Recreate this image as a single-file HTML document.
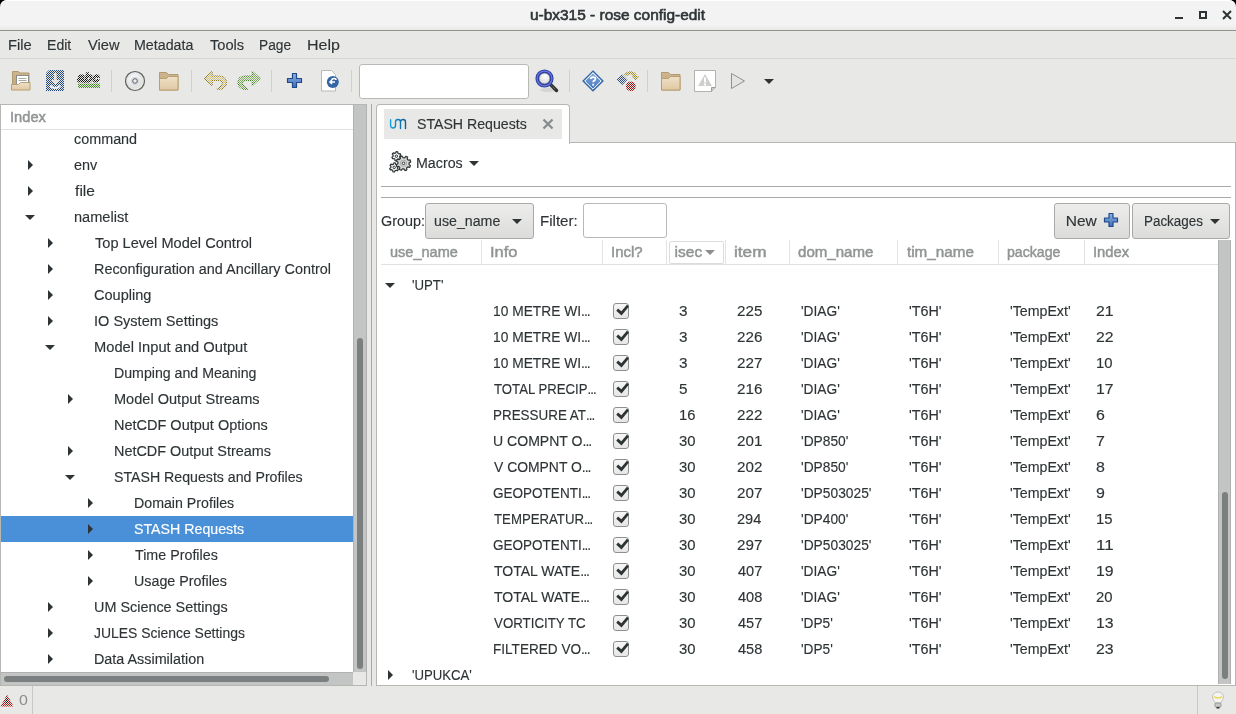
<!DOCTYPE html><html><head><meta charset="utf-8"><style>
*{box-sizing:border-box}
html,body{margin:0;padding:0}
body{width:1236px;height:714px;overflow:hidden;position:relative;background:#e8e8e7;font-family:"Liberation Sans",sans-serif;font-size:15.5px;color:#2e3436}
#root{position:absolute;left:0;top:0;width:1236px;height:714px;will-change:transform;overflow:hidden}
.ab{position:absolute}
.t{position:absolute;white-space:nowrap;line-height:26px;height:26px;transform-origin:0 18px;-webkit-text-stroke:0.15px currentColor}
.arr-r{position:absolute;width:0;height:0;border-top:5px solid transparent;border-bottom:5px solid transparent;border-left:5px solid #2e3436}
.arr-d{position:absolute;width:0;height:0;border-left:5px solid transparent;border-right:5px solid transparent;border-top:5px solid #2e3436}
.sep{position:absolute;width:1px;top:70px;height:22px;background:#cfcfcd}
.csep{position:absolute;top:240px;height:24px;width:1px;background:#e3e3e2}
.cb{position:absolute;left:613px;width:16px;height:16px;border:1px solid #8e908f;border-radius:3px;background:linear-gradient(#f6f6f6,#e6e6e6)}
.btn{position:absolute;border:1px solid #a9aaa8;border-radius:3px;background:linear-gradient(#ededec,#dcdcdb)}
</style></head><body><div id="root">
<svg width="0" height="0" style="position:absolute"><defs>
<pattern id="ck" width="2" height="2" patternUnits="userSpaceOnUse"><rect x="0" y="0" width="1" height="1" fill="#fff"/><rect x="1" y="1" width="1" height="1" fill="#fff"/></pattern>
<mask id="dm" maskUnits="userSpaceOnUse" x="0" y="0" width="40" height="40"><rect x="0" y="0" width="40" height="40" fill="url(#ck)"/></mask>
<linearGradient id="tan" x1="0" y1="0" x2="0" y2="1"><stop offset="0" stop-color="#efe0c6"/><stop offset="1" stop-color="#e0c9a4"/></linearGradient>
<linearGradient id="tanb" x1="0" y1="0" x2="0" y2="1"><stop offset="0" stop-color="#cdb68e"/><stop offset="1" stop-color="#bfa57a"/></linearGradient>
<linearGradient id="blu" x1="0" y1="0" x2="0" y2="1"><stop offset="0" stop-color="#8db2e3"/><stop offset="1" stop-color="#3d6fb8"/></linearGradient>
<radialGradient id="cd" cx="0.45" cy="0.4" r="0.6"><stop offset="0.1" stop-color="#ffffff"/><stop offset="0.55" stop-color="#e6e6ee"/><stop offset="0.8" stop-color="#dfe3d6"/><stop offset="1" stop-color="#fbfbfb"/></radialGradient>
<radialGradient id="glass" cx="0.55" cy="0.35" r="0.6"><stop offset="0" stop-color="#ffffff"/><stop offset="0.6" stop-color="#e4e4e2"/><stop offset="1" stop-color="#cfcfcd"/></radialGradient>
</defs></svg>
<div class="ab" style="left:0;top:0;width:1236px;height:31px;background:#000"></div>
<div class="ab" style="left:0;top:0;width:1236px;height:31px;background:linear-gradient(#f3f3f3 0,#f3f3f3 25px,#e8e8e7 30px);border-radius:7px 7px 0 0;border-bottom:1px solid #92938f;box-shadow:inset 0 1px 0 #ffffff"></div>
<div class="ab" style="left:1175px;top:17px;width:8px;height:2px;background:#2e3436"></div>
<div class="ab" style="left:1199px;top:11px;width:8px;height:8px;border:2px solid #2e3436"></div>
<svg class="ab" style="left:1222px;top:10px" width="10" height="10"><path d="M1 1L9 9M9 1L1 9" stroke="#2e3436" stroke-width="2"/></svg>
<div class="ab" style="left:0;top:58px;width:1236px;height:1px;background:#d6d6d4"></div>
<div class="sep" style="left:111px"></div>
<div class="sep" style="left:191px"></div>
<div class="sep" style="left:271px"></div>
<div class="sep" style="left:351px"></div>
<div class="sep" style="left:569px"></div>
<div class="sep" style="left:647px"></div>
<svg class="ab" style="left:10px;top:70px" width="24" height="24">
<path d="M2.5 1.5h6l1.5 1.5h9v15h-16.5z" fill="url(#tanb)" stroke="#b39b6f"/>
<rect x="6.5" y="5.5" width="12" height="10" fill="#fff" stroke="#8a8c88"/>
<path d="M8.5 8.5h8M8.5 10.5h8" stroke="#a8aaa5"/>
<path d="M1.5 14.5h7l2-2h9.5v7.5h-18.5z" fill="url(#tan)" stroke="#b79f74"/>
</svg>
<svg class="ab" style="left:44px;top:68px" width="24" height="24"><g mask="url(#dm)">
<path d="M2 5L5 2H20V23H2Z" fill="#1f4682"/>
<path d="M9.5 4.5h3.5v7h3.5l-5.25 5.5l-5.25-5.5h3.5z" fill="#dcdcdc" stroke="#333" stroke-width="0.8"/>
<path d="M6.5 17.5c1 2 2 2.5 4.75 2.5s3.75-.5 4.75-2.5" fill="none" stroke="#fafafa" stroke-width="2"/>
</g></svg>
<svg class="ab" style="left:76px;top:68px" width="26" height="24"><g mask="url(#dm)">
<text x="1.5" y="14" font-family="Liberation Sans" font-weight="bold" font-style="italic" font-size="13" fill="#111" stroke="#111" stroke-width="1.3" textLength="22" lengthAdjust="spacingAndGlyphs">abc</text>
<rect x="2" y="15.5" width="22" height="4.5" fill="#3e8a1e"/>
</g></svg>
<svg class="ab" style="left:124px;top:70px" width="22" height="22">
<circle cx="11" cy="11.3" r="9.6" fill="#9a9a9a" opacity="0.5"/><circle cx="11" cy="11" r="9.5" fill="url(#cd)" stroke="#5e605e" stroke-width="1.2"/>
<circle cx="11" cy="11" r="3.6" fill="none" stroke="#d6d6dc" stroke-width="1.5"/>
<circle cx="11" cy="11" r="2.3" fill="#eeeeee" stroke="#4a4c4a" stroke-width="0.9"/>
</svg>
<svg class="ab" style="left:158px;top:70px" width="22" height="22">
<path d="M1.5 2.5h7l2 2h9.5v15.5h-18.5z" fill="url(#tanb)" stroke="#b39b6f"/>
<path d="M1.5 8.5h7l2-2h9.5v13.5h-18.5z" fill="url(#tan)" stroke="#b79f74"/>
</svg>
<svg class="ab" style="left:204px;top:70px" width="26" height="22"><g mask="url(#dm)">
<path d="M0.7 8.5L8.2 1.5V6H15.5C19.8 6 22.5 8.6 22.5 12.2C22.5 15.6 20.2 18.2 17 19.2H12.8C16.2 17.4 18.3 15 18.3 12.8C18.3 11.2 17.2 10.5 15.5 10.5H8.2V15.5Z" fill="#d2c272" stroke="#8a7420" stroke-width="1.1" stroke-linejoin="round"/>
</g></svg>
<svg class="ab" style="left:236px;top:70px" width="26" height="22"><g mask="url(#dm)"><g transform="translate(24.5 0) scale(-1 1)">
<path d="M0.7 8.5L8.2 1.5V6H15.5C19.8 6 22.5 8.6 22.5 12.2C22.5 15.6 20.2 18.2 17 19.2H12.8C16.2 17.4 18.3 15 18.3 12.8C18.3 11.2 17.2 10.5 15.5 10.5H8.2V15.5Z" fill="#7fb25a" stroke="#3f7a1e" stroke-width="1.1" stroke-linejoin="round"/>
</g></g></svg>
<svg class="ab" style="left:286px;top:72px" width="18" height="18">
<path d="M6.5 1.5h4v5h5v4h-5v5h-4v-5h-5v-4h5z" fill="url(#blu)" stroke="#204a87" stroke-width="1.2" stroke-linejoin="round"/>
</svg>
<svg class="ab" style="left:320px;top:69px" width="22" height="24">
<path d="M1.5 1.5h10l4 4v16.5h-14z" fill="#fff" stroke="#b9bab6"/>
<circle cx="12.8" cy="13" r="6" fill="#3465a4"/>
<path d="M16 11c0-2-4-2-4 0M10 13h5M12 11l-2 2l2 2" fill="none" stroke="#fff" stroke-width="1.6"/>
</svg>
<div class="ab" style="left:359px;top:64px;width:170px;height:35px;background:#fff;border:1px solid #b8b9b5;border-radius:3px"></div>
<svg class="ab" style="left:535px;top:69px" width="24" height="24">
<ellipse cx="13" cy="21" rx="8" ry="2" fill="#000" opacity="0.08"/>
<path d="M15.5 15.5l6 6" stroke="#2e3436" stroke-width="3.5" stroke-linecap="round"/>
<path d="M16.5 16.5l4 4" stroke="#8a8a80" stroke-width="1" stroke-dasharray="1 1"/>
<circle cx="9.5" cy="9.5" r="7.4" fill="url(#glass)" stroke="#2c42a6" stroke-width="3.4"/>
<circle cx="9.5" cy="9.5" r="7.4" fill="none" stroke="#6f74dc" stroke-width="1.2"/>
<circle cx="9.5" cy="9.5" r="5.6" fill="none" stroke="#1f2f78" stroke-width="0.7"/>
</svg>
<svg class="ab" style="left:582px;top:70px" width="22" height="22">
<path d="M11 1l10 10l-10 10l-10-10z" fill="url(#blu)" stroke="#3465a4" stroke-width="1.2"/>
<path d="M11 2.8l8.2 8.2l-8.2 8.2l-8.2-8.2z" fill="none" stroke="#fff" stroke-width="1"/>
<path d="M8.8 9c0-2.6 4.6-2.6 4.6 0c0 1.6-2.2 1.6-2.2 3.2" fill="none" stroke="#fff" stroke-width="1.8"/>
<rect x="10.2" y="13.8" width="2" height="1.8" fill="#fff"/>
</svg>
<svg class="ab" style="left:616px;top:70px" width="24" height="24"><g mask="url(#dm)">
<path d="M0.5 9.8L6 4.3L11.5 9.8L6 15.3Z" fill="#2a4a80"/>
<path d="M9.5 5.5C11.5 2 17 1.5 19.5 6" fill="none" stroke="#9c8a20" stroke-width="3.2"/>
<path d="M16 6H23L19.5 10.5Z" fill="#9c8a20"/>
<circle cx="14.8" cy="16.3" r="4.9" fill="#a01010"/>
</g></svg>
<svg class="ab" style="left:660px;top:70px" width="22" height="22">
<path d="M1.5 2.5h7l2 2h9.5v15.5h-18.5z" fill="url(#tanb)" stroke="#b39b6f"/>
<path d="M1.5 8.5h7l2-2h9.5v13.5h-18.5z" fill="url(#tan)" stroke="#b79f74"/>
</svg>
<svg class="ab" style="left:693px;top:69px" width="24" height="24">
<path d="M1.5 1.5h21v17l-4 4h-17z" fill="#fff" stroke="#b2b3af"/>
<path d="M22.5 18.5h-4v4" fill="#c8c8c6" stroke="#9c9d99"/>
<path d="M12 5l7 12h-14z" fill="#cfd0ce"/>
<rect x="11" y="8.5" width="2" height="5" fill="#fff"/><rect x="11" y="14.5" width="2" height="2" fill="#fff"/>
</svg>
<svg class="ab" style="left:730px;top:72px" width="18" height="18">
<path d="M1.5 1.5l13 7.5l-13 7.5z" fill="#e3e4e2" stroke="#8f918e" stroke-linejoin="round"/>
</svg>
<div class="arr-d" style="left:764px;top:79px"></div>
<div class="ab" style="left:0;top:104px;width:367px;height:582px;background:#fff;border:1px solid #b6b6b3"></div>
<div class="ab" style="left:1px;top:129px;width:352px;height:1px;background:#e0e1e0"></div>
<div class="arr-r" style="left:28px;top:160px"></div>
<div class="arr-r" style="left:28px;top:186px"></div>
<div class="arr-d" style="left:25px;top:215px"></div>
<div class="arr-r" style="left:48px;top:238px"></div>
<div class="arr-r" style="left:48px;top:264px"></div>
<div class="arr-r" style="left:48px;top:290px"></div>
<div class="arr-r" style="left:48px;top:316px"></div>
<div class="arr-d" style="left:45px;top:345px"></div>
<div class="arr-r" style="left:68px;top:394px"></div>
<div class="arr-r" style="left:68px;top:446px"></div>
<div class="arr-d" style="left:65px;top:475px"></div>
<div class="arr-r" style="left:88px;top:498px"></div>
<div class="ab" style="left:1px;top:516px;width:352px;height:26px;background:#4a90d9"></div>
<div class="arr-r" style="left:88px;top:524px"></div>
<div class="arr-r" style="left:88px;top:550px"></div>
<div class="arr-r" style="left:88px;top:576px"></div>
<div class="arr-r" style="left:48px;top:602px"></div>
<div class="arr-r" style="left:48px;top:628px"></div>
<div class="arr-r" style="left:48px;top:654px"></div>
<div class="t" style="left:530.30px;top:1.7px;color:#2e3436;transform:scale(0.9960,1.0);font-size:15.5px;-webkit-text-stroke:0.6px currentColor;">u-bx315 - rose config-edit</div>
<div class="t" style="left:8.05px;top:32px;color:#2e3436;transform:scale(0.9478,1.0);font-size:15.5px;">File</div>
<div class="t" style="left:47.09px;top:32px;color:#2e3436;transform:scale(0.9077,1.0);font-size:15.5px;">Edit</div>
<div class="t" style="left:87.60px;top:32px;color:#2e3436;transform:scale(0.9455,1.0);font-size:15.5px;">View</div>
<div class="t" style="left:133.88px;top:32px;color:#2e3436;transform:scale(0.9187,1.0);font-size:15.5px;">Metadata</div>
<div class="t" style="left:209.80px;top:32px;color:#2e3436;transform:scale(0.9444,1.0);font-size:15.5px;">Tools</div>
<div class="t" style="left:258.91px;top:32px;color:#2e3436;transform:scale(0.8857,1.0);font-size:15.5px;">Page</div>
<div class="t" style="left:306.77px;top:32px;color:#2e3436;transform:scale(1.0333,1.0);font-size:15.5px;">Help</div>
<div class="t" style="left:9.65px;top:104px;color:#919494;transform:scale(0.9486,1.0);font-size:15.5px;-webkit-text-stroke:0.5px currentColor;">Index</div>
<div class="t" style="left:74.17px;top:126px;color:#2e3436;transform:scale(0.9273,1.0);font-size:15.5px;">command</div>
<div class="t" style="left:74.17px;top:152px;color:#2e3436;transform:scale(0.9292,1.0);font-size:15.5px;">env</div>
<div class="t" style="left:75.10px;top:178px;color:#2e3436;transform:scale(1.0000,1.0);font-size:15.5px;">file</div>
<div class="t" style="left:74.16px;top:204px;color:#2e3436;transform:scale(0.9404,1.0);font-size:15.5px;">namelist</div>
<div class="t" style="left:95.10px;top:230px;color:#2e3436;transform:scale(0.9398,1.0);font-size:15.5px;">Top Level Model Control</div>
<div class="t" style="left:94.17px;top:256px;color:#2e3436;transform:scale(0.9289,1.0);font-size:15.5px;">Reconfiguration and Ancillary Control</div>
<div class="t" style="left:94.16px;top:282px;color:#2e3436;transform:scale(0.9373,1.0);font-size:15.5px;">Coupling</div>
<div class="t" style="left:94.16px;top:308px;color:#2e3436;transform:scale(0.9374,1.0);font-size:15.5px;">IO System Settings</div>
<div class="t" style="left:94.15px;top:334px;color:#2e3436;transform:scale(0.9466,1.0);font-size:15.5px;">Model Input and Output</div>
<div class="t" style="left:114.19px;top:360px;color:#2e3436;transform:scale(0.9136,1.0);font-size:15.5px;">Dumping and Meaning</div>
<div class="t" style="left:114.16px;top:386px;color:#2e3436;transform:scale(0.9390,1.0);font-size:15.5px;">Model Output Streams</div>
<div class="t" style="left:114.17px;top:412px;color:#2e3436;transform:scale(0.9350,1.0);font-size:15.5px;">NetCDF Output Options</div>
<div class="t" style="left:114.17px;top:438px;color:#2e3436;transform:scale(0.9299,1.0);font-size:15.5px;">NetCDF Output Streams</div>
<div class="t" style="left:114.19px;top:464px;color:#2e3436;transform:scale(0.9137,1.0);font-size:15.5px;">STASH Requests and Profiles</div>
<div class="t" style="left:134.18px;top:490px;color:#2e3436;transform:scale(0.9157,1.0);font-size:15.5px;">Domain Profiles</div>
<div class="t" style="left:134.18px;top:516px;color:#fff;transform:scale(0.9160,1.0);font-size:15.5px;">STASH Requests</div>
<div class="t" style="left:135.10px;top:542px;color:#2e3436;transform:scale(0.9213,1.0);font-size:15.5px;">Time Profiles</div>
<div class="t" style="left:134.18px;top:568px;color:#2e3436;transform:scale(0.9222,1.0);font-size:15.5px;">Usage Profiles</div>
<div class="t" style="left:94.17px;top:594px;color:#2e3436;transform:scale(0.9289,1.0);font-size:15.5px;">UM Science Settings</div>
<div class="t" style="left:94.20px;top:620px;color:#2e3436;transform:scale(0.8982,1.0);font-size:15.5px;">JULES Science Settings</div>
<div class="t" style="left:94.17px;top:646px;color:#2e3436;transform:scale(0.9265,1.0);font-size:15.5px;">Data Assimilation</div>
<div class="ab" style="left:1px;top:105px;width:352px;height:24px;background:#fff"></div>
<div class="t" style="left:9.65px;top:104px;color:#919494;transform:scale(0.9486,1.0);font-size:15.5px;-webkit-text-stroke:0.5px currentColor;">Index</div>
<div class="ab" style="left:353px;top:105px;width:14px;height:567px;background:#c3c4c4;border-left:1px solid #b0b1b0;border-right:1px solid #b0b1b0"></div>
<div class="ab" style="left:357px;top:338px;width:6px;height:331px;background:#7b7f80;border-radius:3px"></div>
<div class="ab" style="left:1px;top:672px;width:352px;height:13px;background:#c3c4c4;border-top:1px solid #b0b1b0"></div>
<div class="ab" style="left:4px;top:676px;width:325px;height:6px;background:#7b7f80;border-radius:3px"></div>
<div class="ab" style="left:353px;top:672px;width:13px;height:13px;background:#e8e8e7"></div>
<div class="ab" style="left:371px;top:104px;width:1px;height:582px;background:#a9aaa8"></div>
<div class="ab" style="left:376px;top:142px;width:860px;height:544px;background:#fff;border:1px solid #b6b6b3"></div>
<div class="ab" style="left:376px;top:104px;width:194px;height:40px;background:#fff;border:1px solid #b6b6b3;border-bottom:none;border-radius:4px 4px 0 0"></div>
<div class="ab" style="left:384px;top:109px;width:178px;height:30px;background:#e8e8e7"></div>
<svg class="ab" style="left:542px;top:118px" width="12" height="12"><path d="M1.5 1.5L10.5 10.5M10.5 1.5L1.5 10.5" stroke="#8a8d8e" stroke-width="2.4"/></svg>
<svg class="ab" style="left:389px;top:118px" width="18" height="12"><defs><linearGradient id="umg" x1="0" y1="0" x2="1" y2="0"><stop offset="0" stop-color="#12a0e0"/><stop offset="1" stop-color="#0d5f94"/></linearGradient></defs><path d="M1.6 1.8V7.6a2.45 2.45 0 0 0 4.9 0V4a2.5 2.5 0 0 1 5 0v6.6M11.5 4a2.5 2.5 0 0 1 5 0v6.6" fill="none" stroke="url(#umg)" stroke-width="1.4" stroke-linecap="round"/></svg>
<svg class="ab" style="left:386px;top:148px" width="28" height="28">
<path d="M13.65 9.20L14.53 10.23L13.53 11.57L12.29 11.02L11.15 11.52L10.71 12.79L9.04 12.59L8.90 11.25L7.91 10.51L6.58 10.76L5.91 9.22L7.01 8.43L7.15 7.20L6.27 6.17L7.27 4.83L8.51 5.38L9.65 4.88L10.09 3.61L11.76 3.81L11.90 5.15L12.89 5.89L14.22 5.64L14.89 7.18L13.79 7.97z" fill="#f6f6f6" stroke="#2e3436" stroke-width="1.2" stroke-linejoin="round"/>
<circle cx="10.4" cy="8.2" r="1.2" fill="none" stroke="#2e3436" stroke-width="1"/>
<path d="M11.45 20.40L12.33 21.43L11.33 22.77L10.09 22.22L8.95 22.72L8.51 23.99L6.84 23.79L6.70 22.45L5.71 21.71L4.38 21.96L3.71 20.42L4.81 19.63L4.95 18.40L4.07 17.37L5.07 16.03L6.31 16.58L7.45 16.08L7.89 14.81L9.56 15.01L9.70 16.35L10.69 17.09L12.02 16.84L12.69 18.38L11.59 19.17z" fill="#f6f6f6" stroke="#2e3436" stroke-width="1.2" stroke-linejoin="round"/>
<circle cx="8.2" cy="19.4" r="1.2" fill="none" stroke="#2e3436" stroke-width="1"/>
<path d="M22.99 16.41L24.53 17.61L23.64 19.43L21.74 18.95L20.59 19.97L20.84 21.91L18.92 22.56L17.92 20.88L16.39 20.79L15.19 22.33L13.37 21.44L13.85 19.54L12.83 18.39L10.89 18.64L10.24 16.72L11.92 15.72L12.01 14.19L10.47 12.99L11.36 11.17L13.26 11.65L14.41 10.63L14.16 8.69L16.08 8.04L17.08 9.72L18.61 9.81L19.81 8.27L21.63 9.16L21.15 11.06L22.17 12.21L24.11 11.96L24.76 13.88L23.08 14.88z" fill="#d9dad8" stroke="#2e3436" stroke-width="1.2" stroke-linejoin="round"/>
<circle cx="17.5" cy="15.3" r="3.2" fill="none" stroke="#a9aaa8" stroke-width="1"/>
<circle cx="17.5" cy="15.3" r="1.3" fill="#fff" stroke="#2e3436" stroke-width="1"/>
</svg>
<div class="arr-d" style="left:469px;top:161px"></div>
<div class="ab" style="left:381px;top:186px;width:850px;height:1px;background:#a9aaa8"></div>
<div class="ab" style="left:381px;top:197px;width:850px;height:1px;background:#a9aaa8"></div>
<div class="btn" style="left:425px;top:203px;width:109px;height:36px"></div>
<div class="arr-d" style="left:512px;top:219px"></div>
<div class="ab" style="left:583px;top:203px;width:84px;height:35px;border:1px solid #b8b9b5;border-radius:3px;background:#fff"></div>
<div class="btn" style="left:1054px;top:203px;width:76px;height:36px"></div>
<svg class="ab" style="left:1103px;top:212px" width="17" height="17">
<path d="M6 1.5h4v4.5h4.5v4h-4.5v4.5h-4v-4.5h-4.5v-4h4.5z" fill="url(#blu)" stroke="#204a87" stroke-width="1.2" stroke-linejoin="round"/>
</svg>
<div class="btn" style="left:1132px;top:203px;width:98px;height:36px"></div>
<div class="arr-d" style="left:1210px;top:219px"></div>
<div class="csep" style="left:481px"></div>
<div class="csep" style="left:602px"></div>
<div class="csep" style="left:666px"></div>
<div class="csep" style="left:725px"></div>
<div class="csep" style="left:789px"></div>
<div class="csep" style="left:897px"></div>
<div class="csep" style="left:998px"></div>
<div class="csep" style="left:1084px"></div>
<div class="ab" style="left:669px;top:241px;width:55px;height:23px;border:1px solid #dcdcdb;border-radius:2px"></div>
<div class="ab" style="left:705px;top:250px;width:0;height:0;border-left:5px solid transparent;border-right:5px solid transparent;border-top:5px solid #8b8e8f"></div>
<div class="ab" style="left:381px;top:264px;width:837px;height:1px;background:#e0e1e0"></div>
<div class="arr-d" style="left:385px;top:283px"></div>
<div class="cb" style="top:303px"></div>
<svg class="ab" style="left:613px;top:303px" width="16" height="16"><path d="M4.2 6.6L8.4 10.4L15 2.6" fill="none" stroke="#2e3436" stroke-width="2.8"/></svg>
<div class="cb" style="top:329px"></div>
<svg class="ab" style="left:613px;top:329px" width="16" height="16"><path d="M4.2 6.6L8.4 10.4L15 2.6" fill="none" stroke="#2e3436" stroke-width="2.8"/></svg>
<div class="cb" style="top:355px"></div>
<svg class="ab" style="left:613px;top:355px" width="16" height="16"><path d="M4.2 6.6L8.4 10.4L15 2.6" fill="none" stroke="#2e3436" stroke-width="2.8"/></svg>
<div class="cb" style="top:381px"></div>
<svg class="ab" style="left:613px;top:381px" width="16" height="16"><path d="M4.2 6.6L8.4 10.4L15 2.6" fill="none" stroke="#2e3436" stroke-width="2.8"/></svg>
<div class="cb" style="top:407px"></div>
<svg class="ab" style="left:613px;top:407px" width="16" height="16"><path d="M4.2 6.6L8.4 10.4L15 2.6" fill="none" stroke="#2e3436" stroke-width="2.8"/></svg>
<div class="cb" style="top:433px"></div>
<svg class="ab" style="left:613px;top:433px" width="16" height="16"><path d="M4.2 6.6L8.4 10.4L15 2.6" fill="none" stroke="#2e3436" stroke-width="2.8"/></svg>
<div class="cb" style="top:459px"></div>
<svg class="ab" style="left:613px;top:459px" width="16" height="16"><path d="M4.2 6.6L8.4 10.4L15 2.6" fill="none" stroke="#2e3436" stroke-width="2.8"/></svg>
<div class="cb" style="top:485px"></div>
<svg class="ab" style="left:613px;top:485px" width="16" height="16"><path d="M4.2 6.6L8.4 10.4L15 2.6" fill="none" stroke="#2e3436" stroke-width="2.8"/></svg>
<div class="cb" style="top:511px"></div>
<svg class="ab" style="left:613px;top:511px" width="16" height="16"><path d="M4.2 6.6L8.4 10.4L15 2.6" fill="none" stroke="#2e3436" stroke-width="2.8"/></svg>
<div class="cb" style="top:537px"></div>
<svg class="ab" style="left:613px;top:537px" width="16" height="16"><path d="M4.2 6.6L8.4 10.4L15 2.6" fill="none" stroke="#2e3436" stroke-width="2.8"/></svg>
<div class="cb" style="top:563px"></div>
<svg class="ab" style="left:613px;top:563px" width="16" height="16"><path d="M4.2 6.6L8.4 10.4L15 2.6" fill="none" stroke="#2e3436" stroke-width="2.8"/></svg>
<div class="cb" style="top:589px"></div>
<svg class="ab" style="left:613px;top:589px" width="16" height="16"><path d="M4.2 6.6L8.4 10.4L15 2.6" fill="none" stroke="#2e3436" stroke-width="2.8"/></svg>
<div class="cb" style="top:615px"></div>
<svg class="ab" style="left:613px;top:615px" width="16" height="16"><path d="M4.2 6.6L8.4 10.4L15 2.6" fill="none" stroke="#2e3436" stroke-width="2.8"/></svg>
<div class="cb" style="top:641px"></div>
<svg class="ab" style="left:613px;top:641px" width="16" height="16"><path d="M4.2 6.6L8.4 10.4L15 2.6" fill="none" stroke="#2e3436" stroke-width="2.8"/></svg>
<div class="t" style="left:417.39px;top:111px;color:#2e3436;transform:scale(0.9118,1.0);font-size:15.5px;">STASH Requests</div>
<div class="t" style="left:415.88px;top:150px;color:#2e3436;transform:scale(0.9184,1.0);font-size:15.5px;">Macros</div>
<div class="t" style="left:381.27px;top:208px;color:#2e3436;transform:scale(0.9267,1.0);font-size:15.5px;">Group:</div>
<div class="t" style="left:433.98px;top:208px;color:#2e3436;transform:scale(0.9155,1.0);font-size:15.5px;">use_name</div>
<div class="t" style="left:539.83px;top:208px;color:#2e3436;transform:scale(0.9730,1.0);font-size:15.5px;">Filter:</div>
<div class="t" style="left:1065.80px;top:208px;color:#2e3436;transform:scale(1.0000,1.0);font-size:15.5px;">New</div>
<div class="t" style="left:1143.93px;top:208px;color:#2e3436;transform:scale(0.8657,1.0);font-size:15.5px;">Packages</div>
<div class="t" style="left:389.56px;top:239px;color:#919494;transform:scale(0.9366,1.0);font-size:15.5px;-webkit-text-stroke:0.5px currentColor;">use_name</div>
<div class="t" style="left:490.14px;top:239px;color:#919494;transform:scale(1.0625,1.0);font-size:15.5px;-webkit-text-stroke:0.5px currentColor;">Info</div>
<div class="t" style="left:610.84px;top:239px;color:#919494;transform:scale(0.9645,1.0);font-size:15.5px;-webkit-text-stroke:0.5px currentColor;">Incl?</div>
<div class="t" style="left:674.60px;top:239px;color:#919494;transform:scale(1.0000,1.0);font-size:15.5px;-webkit-text-stroke:0.5px currentColor;">isec</div>
<div class="t" style="left:733.69px;top:239px;color:#919494;transform:scale(1.1074,1.0);font-size:15.5px;-webkit-text-stroke:0.5px currentColor;">item</div>
<div class="t" style="left:797.93px;top:239px;color:#919494;transform:scale(0.9724,1.0);font-size:15.5px;-webkit-text-stroke:0.5px currentColor;">dom_name</div>
<div class="t" style="left:906.80px;top:239px;color:#919494;transform:scale(0.9838,1.0);font-size:15.5px;-webkit-text-stroke:0.5px currentColor;">tim_name</div>
<div class="t" style="left:1006.89px;top:239px;color:#919494;transform:scale(0.9123,1.0);font-size:15.5px;-webkit-text-stroke:0.5px currentColor;">package</div>
<div class="t" style="left:1093.35px;top:239px;color:#919494;transform:scale(0.9541,1.0);font-size:15.5px;-webkit-text-stroke:0.5px currentColor;">Index</div>
<div class="t" style="left:412.25px;top:272px;color:#2e3436;transform:scale(0.8514,1.0);font-size:15.5px;">'UPT'</div>
<div class="t" style="left:493.01px;top:298px;color:#2e3436;transform:scale(0.8889,1.0);font-size:15.5px;">10 METRE WI<span style="letter-spacing:-1.1px">...</span></div>
<div class="t" style="left:678.71px;top:298px;color:#2e3436;transform:scale(0.9857,1.0);font-size:15.5px;">3</div>
<div class="t" style="left:737.32px;top:298px;color:#2e3436;transform:scale(0.9792,1.0);font-size:15.5px;">225</div>
<div class="t" style="left:800.91px;top:298px;color:#2e3436;transform:scale(0.8857,1.0);font-size:15.5px;">'DIAG'</div>
<div class="t" style="left:908.67px;top:298px;color:#2e3436;transform:scale(0.9265,1.0);font-size:15.5px;">'T6H'</div>
<div class="t" style="left:1010.18px;top:298px;color:#2e3436;transform:scale(0.9154,1.0);font-size:15.5px;">'TempExt'</div>
<div class="t" style="left:1096.28px;top:298px;color:#2e3436;transform:scale(1.0200,1.0);font-size:15.5px;">21</div>
<div class="t" style="left:493.01px;top:324px;color:#2e3436;transform:scale(0.8889,1.0);font-size:15.5px;">10 METRE WI<span style="letter-spacing:-1.1px">...</span></div>
<div class="t" style="left:678.71px;top:324px;color:#2e3436;transform:scale(0.9857,1.0);font-size:15.5px;">3</div>
<div class="t" style="left:737.32px;top:324px;color:#2e3436;transform:scale(0.9792,1.0);font-size:15.5px;">226</div>
<div class="t" style="left:800.91px;top:324px;color:#2e3436;transform:scale(0.8857,1.0);font-size:15.5px;">'DIAG'</div>
<div class="t" style="left:908.67px;top:324px;color:#2e3436;transform:scale(0.9265,1.0);font-size:15.5px;">'T6H'</div>
<div class="t" style="left:1010.18px;top:324px;color:#2e3436;transform:scale(0.9154,1.0);font-size:15.5px;">'TempExt'</div>
<div class="t" style="left:1096.28px;top:324px;color:#2e3436;transform:scale(1.0200,1.0);font-size:15.5px;">22</div>
<div class="t" style="left:493.01px;top:350px;color:#2e3436;transform:scale(0.8889,1.0);font-size:15.5px;">10 METRE WI<span style="letter-spacing:-1.1px">...</span></div>
<div class="t" style="left:678.71px;top:350px;color:#2e3436;transform:scale(0.9857,1.0);font-size:15.5px;">3</div>
<div class="t" style="left:737.32px;top:350px;color:#2e3436;transform:scale(0.9792,1.0);font-size:15.5px;">227</div>
<div class="t" style="left:800.91px;top:350px;color:#2e3436;transform:scale(0.8857,1.0);font-size:15.5px;">'DIAG'</div>
<div class="t" style="left:908.67px;top:350px;color:#2e3436;transform:scale(0.9265,1.0);font-size:15.5px;">'T6H'</div>
<div class="t" style="left:1010.18px;top:350px;color:#2e3436;transform:scale(0.9154,1.0);font-size:15.5px;">'TempExt'</div>
<div class="t" style="left:1096.34px;top:350px;color:#2e3436;transform:scale(0.9563,1.0);font-size:15.5px;">10</div>
<div class="t" style="left:493.90px;top:376px;color:#2e3436;transform:scale(0.8500,1.0);font-size:15.5px;">TOTAL PRECIP<span style="letter-spacing:-1.1px">...</span></div>
<div class="t" style="left:678.71px;top:376px;color:#2e3436;transform:scale(0.9857,1.0);font-size:15.5px;">5</div>
<div class="t" style="left:737.32px;top:376px;color:#2e3436;transform:scale(0.9792,1.0);font-size:15.5px;">216</div>
<div class="t" style="left:800.91px;top:376px;color:#2e3436;transform:scale(0.8857,1.0);font-size:15.5px;">'DIAG'</div>
<div class="t" style="left:908.67px;top:376px;color:#2e3436;transform:scale(0.9265,1.0);font-size:15.5px;">'T6H'</div>
<div class="t" style="left:1010.18px;top:376px;color:#2e3436;transform:scale(0.9154,1.0);font-size:15.5px;">'TempExt'</div>
<div class="t" style="left:1096.28px;top:376px;color:#2e3436;transform:scale(1.0200,1.0);font-size:15.5px;">17</div>
<div class="t" style="left:493.03px;top:402px;color:#2e3436;transform:scale(0.8664,1.0);font-size:15.5px;">PRESSURE AT<span style="letter-spacing:-1.1px">...</span></div>
<div class="t" style="left:678.74px;top:402px;color:#2e3436;transform:scale(0.9563,1.0);font-size:15.5px;">16</div>
<div class="t" style="left:737.32px;top:402px;color:#2e3436;transform:scale(0.9792,1.0);font-size:15.5px;">222</div>
<div class="t" style="left:800.91px;top:402px;color:#2e3436;transform:scale(0.8857,1.0);font-size:15.5px;">'DIAG'</div>
<div class="t" style="left:908.67px;top:402px;color:#2e3436;transform:scale(0.9265,1.0);font-size:15.5px;">'T6H'</div>
<div class="t" style="left:1010.18px;top:402px;color:#2e3436;transform:scale(0.9154,1.0);font-size:15.5px;">'TempExt'</div>
<div class="t" style="left:1096.27px;top:402px;color:#2e3436;transform:scale(1.0286,1.0);font-size:15.5px;">6</div>
<div class="t" style="left:492.99px;top:428px;color:#2e3436;transform:scale(0.9065,1.0);font-size:15.5px;">U COMPNT O<span style="letter-spacing:-1.1px">...</span></div>
<div class="t" style="left:678.74px;top:428px;color:#2e3436;transform:scale(0.9563,1.0);font-size:15.5px;">30</div>
<div class="t" style="left:737.32px;top:428px;color:#2e3436;transform:scale(0.9792,1.0);font-size:15.5px;">201</div>
<div class="t" style="left:800.91px;top:428px;color:#2e3436;transform:scale(0.8885,1.0);font-size:15.5px;">'DP850'</div>
<div class="t" style="left:908.67px;top:428px;color:#2e3436;transform:scale(0.9265,1.0);font-size:15.5px;">'T6H'</div>
<div class="t" style="left:1010.18px;top:428px;color:#2e3436;transform:scale(0.9154,1.0);font-size:15.5px;">'TempExt'</div>
<div class="t" style="left:1096.27px;top:428px;color:#2e3436;transform:scale(1.0286,1.0);font-size:15.5px;">7</div>
<div class="t" style="left:493.90px;top:454px;color:#2e3436;transform:scale(0.8972,1.0);font-size:15.5px;">V COMPNT O<span style="letter-spacing:-1.1px">...</span></div>
<div class="t" style="left:678.74px;top:454px;color:#2e3436;transform:scale(0.9563,1.0);font-size:15.5px;">30</div>
<div class="t" style="left:737.32px;top:454px;color:#2e3436;transform:scale(0.9792,1.0);font-size:15.5px;">202</div>
<div class="t" style="left:800.91px;top:454px;color:#2e3436;transform:scale(0.8885,1.0);font-size:15.5px;">'DP850'</div>
<div class="t" style="left:908.67px;top:454px;color:#2e3436;transform:scale(0.9265,1.0);font-size:15.5px;">'T6H'</div>
<div class="t" style="left:1010.18px;top:454px;color:#2e3436;transform:scale(0.9154,1.0);font-size:15.5px;">'TempExt'</div>
<div class="t" style="left:1096.27px;top:454px;color:#2e3436;transform:scale(1.0286,1.0);font-size:15.5px;">8</div>
<div class="t" style="left:493.03px;top:480px;color:#2e3436;transform:scale(0.8727,1.0);font-size:15.5px;">GEOPOTENTI<span style="letter-spacing:-1.1px">...</span></div>
<div class="t" style="left:678.74px;top:480px;color:#2e3436;transform:scale(0.9563,1.0);font-size:15.5px;">30</div>
<div class="t" style="left:737.32px;top:480px;color:#2e3436;transform:scale(0.9792,1.0);font-size:15.5px;">207</div>
<div class="t" style="left:800.91px;top:480px;color:#2e3436;transform:scale(0.8897,1.0);font-size:15.5px;">'DP503025'</div>
<div class="t" style="left:908.67px;top:480px;color:#2e3436;transform:scale(0.9265,1.0);font-size:15.5px;">'T6H'</div>
<div class="t" style="left:1010.18px;top:480px;color:#2e3436;transform:scale(0.9154,1.0);font-size:15.5px;">'TempExt'</div>
<div class="t" style="left:1096.27px;top:480px;color:#2e3436;transform:scale(1.0286,1.0);font-size:15.5px;">9</div>
<div class="t" style="left:493.90px;top:506px;color:#2e3436;transform:scale(0.8522,1.0);font-size:15.5px;">TEMPERATUR<span style="letter-spacing:-1.1px">...</span></div>
<div class="t" style="left:678.74px;top:506px;color:#2e3436;transform:scale(0.9563,1.0);font-size:15.5px;">30</div>
<div class="t" style="left:737.36px;top:506px;color:#2e3436;transform:scale(0.9400,1.0);font-size:15.5px;">294</div>
<div class="t" style="left:800.91px;top:506px;color:#2e3436;transform:scale(0.8885,1.0);font-size:15.5px;">'DP400'</div>
<div class="t" style="left:908.67px;top:506px;color:#2e3436;transform:scale(0.9265,1.0);font-size:15.5px;">'T6H'</div>
<div class="t" style="left:1010.18px;top:506px;color:#2e3436;transform:scale(0.9154,1.0);font-size:15.5px;">'TempExt'</div>
<div class="t" style="left:1096.34px;top:506px;color:#2e3436;transform:scale(0.9563,1.0);font-size:15.5px;">15</div>
<div class="t" style="left:493.03px;top:532px;color:#2e3436;transform:scale(0.8727,1.0);font-size:15.5px;">GEOPOTENTI<span style="letter-spacing:-1.1px">...</span></div>
<div class="t" style="left:678.74px;top:532px;color:#2e3436;transform:scale(0.9563,1.0);font-size:15.5px;">30</div>
<div class="t" style="left:737.32px;top:532px;color:#2e3436;transform:scale(0.9792,1.0);font-size:15.5px;">297</div>
<div class="t" style="left:800.91px;top:532px;color:#2e3436;transform:scale(0.8897,1.0);font-size:15.5px;">'DP503025'</div>
<div class="t" style="left:908.67px;top:532px;color:#2e3436;transform:scale(0.9265,1.0);font-size:15.5px;">'T6H'</div>
<div class="t" style="left:1010.18px;top:532px;color:#2e3436;transform:scale(0.9154,1.0);font-size:15.5px;">'TempExt'</div>
<div class="t" style="left:1096.21px;top:532px;color:#2e3436;transform:scale(1.0929,1.0);font-size:15.5px;">11</div>
<div class="t" style="left:493.90px;top:558px;color:#2e3436;transform:scale(0.9048,1.0);font-size:15.5px;">TOTAL WATE<span style="letter-spacing:-1.1px">...</span></div>
<div class="t" style="left:678.74px;top:558px;color:#2e3436;transform:scale(0.9563,1.0);font-size:15.5px;">30</div>
<div class="t" style="left:738.30px;top:558px;color:#2e3436;transform:scale(0.9400,1.0);font-size:15.5px;">407</div>
<div class="t" style="left:800.91px;top:558px;color:#2e3436;transform:scale(0.8857,1.0);font-size:15.5px;">'DIAG'</div>
<div class="t" style="left:908.67px;top:558px;color:#2e3436;transform:scale(0.9265,1.0);font-size:15.5px;">'T6H'</div>
<div class="t" style="left:1010.18px;top:558px;color:#2e3436;transform:scale(0.9154,1.0);font-size:15.5px;">'TempExt'</div>
<div class="t" style="left:1096.28px;top:558px;color:#2e3436;transform:scale(1.0200,1.0);font-size:15.5px;">19</div>
<div class="t" style="left:493.90px;top:584px;color:#2e3436;transform:scale(0.9048,1.0);font-size:15.5px;">TOTAL WATE<span style="letter-spacing:-1.1px">...</span></div>
<div class="t" style="left:678.74px;top:584px;color:#2e3436;transform:scale(0.9563,1.0);font-size:15.5px;">30</div>
<div class="t" style="left:738.30px;top:584px;color:#2e3436;transform:scale(0.9400,1.0);font-size:15.5px;">408</div>
<div class="t" style="left:800.91px;top:584px;color:#2e3436;transform:scale(0.8857,1.0);font-size:15.5px;">'DIAG'</div>
<div class="t" style="left:908.67px;top:584px;color:#2e3436;transform:scale(0.9265,1.0);font-size:15.5px;">'T6H'</div>
<div class="t" style="left:1010.18px;top:584px;color:#2e3436;transform:scale(0.9154,1.0);font-size:15.5px;">'TempExt'</div>
<div class="t" style="left:1096.34px;top:584px;color:#2e3436;transform:scale(0.9563,1.0);font-size:15.5px;">20</div>
<div class="t" style="left:493.90px;top:610px;color:#2e3436;transform:scale(0.8585,1.0);font-size:15.5px;">VORTICITY TC</div>
<div class="t" style="left:678.74px;top:610px;color:#2e3436;transform:scale(0.9563,1.0);font-size:15.5px;">30</div>
<div class="t" style="left:738.30px;top:610px;color:#2e3436;transform:scale(0.9400,1.0);font-size:15.5px;">457</div>
<div class="t" style="left:800.92px;top:610px;color:#2e3436;transform:scale(0.8824,1.0);font-size:15.5px;">'DP5'</div>
<div class="t" style="left:908.67px;top:610px;color:#2e3436;transform:scale(0.9265,1.0);font-size:15.5px;">'T6H'</div>
<div class="t" style="left:1010.18px;top:610px;color:#2e3436;transform:scale(0.9154,1.0);font-size:15.5px;">'TempExt'</div>
<div class="t" style="left:1096.28px;top:610px;color:#2e3436;transform:scale(1.0200,1.0);font-size:15.5px;">13</div>
<div class="t" style="left:493.02px;top:636px;color:#2e3436;transform:scale(0.8761,1.0);font-size:15.5px;">FILTERED VO<span style="letter-spacing:-1.1px">...</span></div>
<div class="t" style="left:678.74px;top:636px;color:#2e3436;transform:scale(0.9563,1.0);font-size:15.5px;">30</div>
<div class="t" style="left:738.30px;top:636px;color:#2e3436;transform:scale(0.9400,1.0);font-size:15.5px;">458</div>
<div class="t" style="left:800.92px;top:636px;color:#2e3436;transform:scale(0.8824,1.0);font-size:15.5px;">'DP5'</div>
<div class="t" style="left:908.67px;top:636px;color:#2e3436;transform:scale(0.9265,1.0);font-size:15.5px;">'T6H'</div>
<div class="t" style="left:1010.18px;top:636px;color:#2e3436;transform:scale(0.9154,1.0);font-size:15.5px;">'TempExt'</div>
<div class="t" style="left:1096.28px;top:636px;color:#2e3436;transform:scale(1.0200,1.0);font-size:15.5px;">23</div>
<div class="arr-r" style="left:388px;top:670px"></div>
<div class="ab" style="left:378px;top:662px;width:840px;height:23px;overflow:hidden">
<div class="t" style="left:34.35px;top:0px;color:#2e3436;transform:scale(0.8493,1.0);font-size:15.5px;">'UPUKCA'</div>
</div>
<div class="ab" style="left:1218px;top:240px;width:13px;height:444px;background:#c3c4c4;border-left:1px solid #b0b1b0;border-right:1px solid #b0b1b0"></div>
<div class="ab" style="left:1222px;top:492px;width:6px;height:187px;background:#7b7f80;border-radius:3px"></div>
<div class="ab" style="left:32px;top:686px;width:1px;height:28px;background:#c8c8c6"></div>
<div class="ab" style="left:1197px;top:686px;width:1px;height:28px;background:#c8c8c6"></div>
<svg class="ab" style="left:0;top:694px" width="14" height="14"><g mask="url(#dm)">
<path d="M7 0.5l6.5 12h-13z" fill="#b01515"/><path d="M6 4h2v5h-2z" fill="#111"/>
</g></svg>
<svg class="ab" style="left:1211px;top:691px" width="14" height="18">
<path d="M7 1c3.5 0 5.5 2.3 5.5 5c0 2.5-2 3.8-2.5 6h-6c-.5-2.2-2.5-3.5-2.5-6c0-2.7 2-5 5.5-5z" fill="#f4f4f2" stroke="#b8b9b5" stroke-width="0.8"/>
<path d="M3 5.5c2 2 6 2 8 0" stroke="#e8d84a" stroke-width="1.6" fill="none"/>
<rect x="4" y="12" width="6" height="4" rx="1" fill="#c9cac7" stroke="#777" stroke-width="0.6"/>
<rect x="5.5" y="16" width="3" height="1.5" fill="#2e3436"/>
</svg>
<div class="t" style="left:19.47px;top:687px;color:#8b8e8f;transform:scale(1.0286,1.0);font-size:15.5px;-webkit-text-stroke:0;">0</div>
</div></body></html>
